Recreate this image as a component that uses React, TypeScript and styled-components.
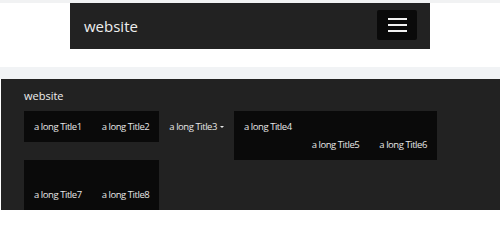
import React from 'react'
import styled, { createGlobalStyle } from 'styled-components'

const GlobalStyle = createGlobalStyle`
  html, body {
    margin: 0;
    padding: 0;
    background: #fff;
    font-family: 'Open Sans', 'Noto Sans', sans-serif;
  }
`

const Page = styled.div`
  width: 500px;
  height: 242px;
  overflow: hidden;
  border-top: 3px solid #f1f2f3;
`

const TopBar = styled.div`
  margin: 0 70px;
  height: 46px;
  background: #222;
  display: flex;
  align-items: center;
  justify-content: space-between;
  padding: 0 13px 0 14px;
  box-sizing: border-box;
`

const Brand = styled.span<{ $size: number }>`
  color: #eee;
  font-size: ${({ $size }) => $size}px;
  line-height: 1;
`

const Burger = styled.button`
  width: 40px;
  height: 30px;
  padding: 0;
  margin-top: -2px;
  border: none;
  border-radius: 2px;
  background: #0a0a0a;
  display: flex;
  flex-direction: column;
  align-items: center;
  justify-content: center;
  gap: 3.6px;
  span {
    display: block;
    width: 19px;
    height: 2px;
    background: #f2f2f2;
  }
`

const Band = styled.div`
  margin-top: 18px;
  height: 12px;
  background: #f1f3f5;
`

const Section = styled.div`
  margin-left: 1px;
  background: #222;
  padding-left: 23px;
`

const Header = styled.div`
  padding-top: 7px;
  height: 25px;
  line-height: 17px;
`

const Row = styled.div`
  display: flex;
  align-items: flex-start;
`

const Group = styled.div<{ $offset?: number }>`
  display: flex;
  align-items: flex-start;
  background: #0a0a0a;
  padding-top: ${({ $offset }) => $offset || 0}px;
`

const Item = styled.a`
  display: flex;
  align-items: center;
  height: 31px;
  padding: 0 10px;
  color: #e6e6e6;
  font-size: 9.5px;
  letter-spacing: -0.45px;
  white-space: nowrap;
  text-decoration: none;
`

const Caret = styled.span`
  margin-left: 3px;
  width: 0;
  height: 0;
  border-left: 2px solid transparent;
  border-right: 2px solid transparent;
  border-top: 2px solid #e6e6e6;
`

export default function App() {
  return (
    <Page>
      <GlobalStyle />
      <TopBar>
        <Brand $size={15}>website</Brand>
        <Burger>
          <span />
          <span />
          <span />
        </Burger>
      </TopBar>
      <Band />
      <Section>
        <Header>
          <Brand $size={11}>website</Brand>
        </Header>
        <Row>
          <Group>
            <Item>a long Title1</Item>
            <Item>a long Title2</Item>
          </Group>
          <Item>
            a long Title3
            <Caret />
          </Item>
          <Group>
            <Item>a long Title4</Item>
            <Group $offset={18}>
              <Item>a long Title5</Item>
              <Item>a long Title6</Item>
            </Group>
          </Group>
        </Row>
        <Row>
          <Group $offset={19}>
            <Item>a long Title7</Item>
            <Item>a long Title8</Item>
          </Group>
        </Row>
      </Section>
    </Page>
  )
}
